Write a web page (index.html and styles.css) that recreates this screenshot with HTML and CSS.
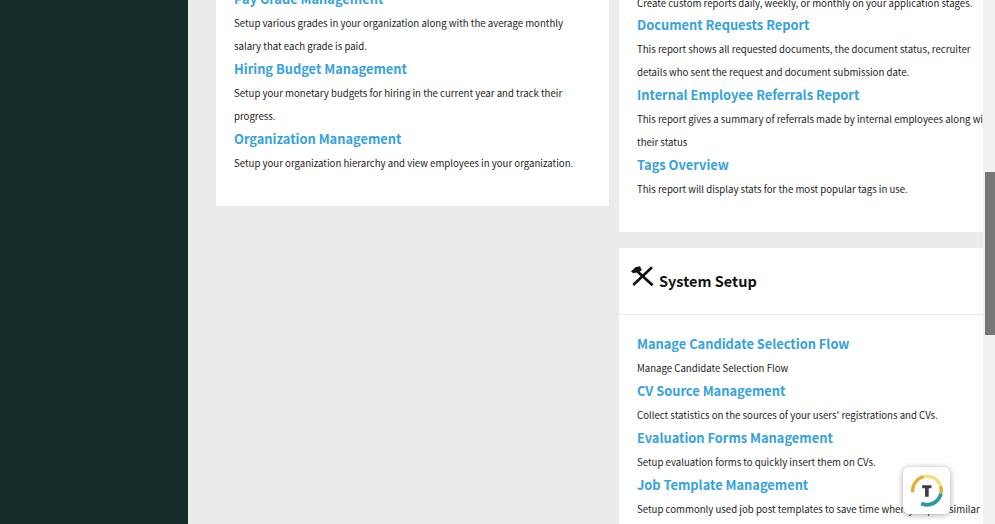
FILE: index.html
```html
<!DOCTYPE html>
<html lang="en">
<head>
<meta charset="utf-8">
<title>Admin</title>
<link rel="stylesheet" href="styles.css">
</head>
<body>
<div class="app">
  <aside class="sidebar"></aside>
  <main class="main">
    <section class="col col-left">
      <div class="card card-left">
        <div class="items">
          <h3>Pay Grade Management</h3>
          <p>Setup various grades in your organization along with the average monthly salary that each grade is paid.</p>
          <h3>Hiring Budget Management</h3>
          <p>Setup your monetary budgets for hiring in the current year and track their progress.</p>
          <h3>Organization Management</h3>
          <p>Setup your organization hierarchy and view employees in your organization.</p>
        </div>
      </div>
    </section>
    <section class="col col-right">
      <div class="card card-reports">
        <div class="items">
          <p class="lead">Create custom reports daily, weekly, or monthly on your application stages.</p>
          <h3>Document Requests Report</h3>
          <p>This report shows all requested documents, the document status, recruiter details who sent the request and document submission date.</p>
          <h3>Internal Employee Referrals Report</h3>
          <p>This report gives a summary of referrals made by internal employees along with their status</p>
          <h3>Tags Overview</h3>
          <p>This report will display stats for the most popular tags in use.</p>
        </div>
      </div>
      <div class="card card-setup">
        <header class="card-head">
          <svg class="tools" viewBox="0 0 24 24" width="24" height="24" aria-hidden="true">
            <path d="M22 2.2 L3.2 20" fill="none" stroke="#111" stroke-width="2.6"/>
            <path d="M7.5 6.5 L22.6 20.2" fill="none" stroke="#111" stroke-width="2.8"/>
            <path d="M1 6.5 L5.5 2.2 L10 1.2 L11.8 5.2 L8.5 7.2 L5 7.8 L3.5 8.2 Z" fill="#111"/>
          </svg>
          <h2>System Setup</h2>
        </header>
        <div class="items items-setup">
          <h3>Manage Candidate Selection Flow</h3>
          <p>Manage Candidate Selection Flow</p>
          <h3>CV Source Management</h3>
          <p>Collect statistics on the sources of your users' registrations and CVs.</p>
          <h3>Evaluation Forms Management</h3>
          <p>Setup evaluation forms to quickly insert them on CVs.</p>
          <h3>Job Template Management</h3>
          <p>Setup commonly used job post templates to save time when you post similar jobs.</p>
        </div>
      </div>
    </section>
  </main>
  <div class="scrollbar"><div class="thumb"></div></div>
</div>
<div class="widget">
  <svg viewBox="0 0 36 36" width="36" height="36" aria-hidden="true">
    <path d="M3.8 19.3 A14.3 14.3 0 0 1 14.7 3.6" fill="none" stroke="#e7ad33" stroke-width="3.4"/>
    <path d="M14.7 3.6 A14.3 14.3 0 0 1 31.6 13.2" fill="none" stroke="#f8dc80" stroke-width="3.4"/>
    <path d="M31.6 13.2 A14.3 14.3 0 0 1 31.9 20.7" fill="none" stroke="#e7ad33" stroke-width="3.4"/>
    <path d="M31.9 20.7 A14.3 14.3 0 0 1 12.2 30.6" fill="none" stroke="#2a96ac" stroke-width="3.8"/>
    <path d="M13.2 12.2 H22.5 V15.2 H19.7 V23.8 H16 V15.2 H13.2 Z" fill="#3c3f4a"/>
  </svg>
</div>
</body>
</html>
```
FILE: styles.css
```css
* { box-sizing: border-box; }
html, body { margin: 0; height: 100%; overflow: hidden; }
body {
  font-family: "Noto Sans CJK JP", "Noto Sans CJK SC", "Noto Sans", sans-serif;
  background: #ebebeb;
}
.app { display: flex; height: 524px; overflow: hidden; }
.sidebar { width: 188px; flex: none; background: #132b29; }
.main {
  flex: none;
  width: 795px;
  display: flex;
  align-items: flex-start;
  gap: 10px;
  padding-left: 28px;
  overflow: hidden;
  background: #ebebeb;
}
.col { flex: none; }
.col-left { width: 393px; margin-top: -12px; }
.col-right { width: 396px; margin-top: -8px; }
.card { background: #fff; }
.card-left { height: 218px; padding: 0 18px; }
.card-reports { height: 240px; padding: 0 18px; }
.card-setup { margin-top: 16px; height: 400px; }
.card-head {
  display: flex;
  align-items: center;
  height: 67px;
  padding-left: 11px;
  border-bottom: 1px solid #ebebeb;
}
.tools { margin: -8px 5px 0 0; flex: none; }
h2 { margin: 0; font-size: 14.5px; line-height: 24px; font-weight: 700; color: #111; }
.items-setup { padding: 18px 18px 0; }
h3 {
  margin: 0;
  height: 24px;
  font-size: 12.85px;
  line-height: 22px;
  font-weight: 700;
  color: #35a2dd;
}
p {
  margin: 0;
  font-size: 9.65px;
  line-height: 23px;
  font-weight: 400;
  color: #222;
}
p.lead { margin-bottom: -1px; }
.scrollbar {
  flex: none;
  width: 12px;
  height: 524px;
  padding: 172px 0 0 2px;
  background: #f1f1f1;
}
.thumb { height: 163px; background: #787878; }
.widget {
  position: fixed;
  left: 903px;
  top: 467px;
  width: 47px;
  height: 47px;
  display: flex;
  align-items: center;
  justify-content: center;
  background: #fff;
  border-radius: 6px;
  box-shadow: 0 1px 6px rgba(0, 0, 0, 0.35);
}
```
